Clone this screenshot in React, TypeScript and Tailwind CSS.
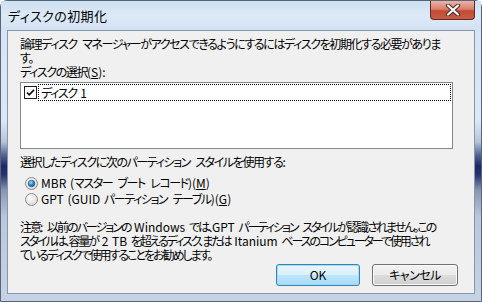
import React from "react";

const font = { fontFamily: '"Noto Sans CJK JP", "Liberation Sans", sans-serif' };

function L({ children }: { children: React.ReactNode }) {
  return <span className="inline-block leading-[14px] tracking-[0px] [word-spacing:1px]">{children}</span>;
}

function CheckBox() {
  return (
    <svg width="13" height="13" viewBox="0 0 13 13" className="shrink-0">
      <rect x="0.5" y="0.5" width="12" height="12" fill="#fff" stroke="#1e1e1e" />
      <path d="M3 6.5 L5.2 8.8 L10 3.8" fill="none" stroke="#111" strokeWidth="1.8" />
    </svg>
  );
}

function Radio({ checked }: { checked?: boolean }) {
  return (
    <svg width="13" height="13" viewBox="0 0 13 13" className="shrink-0">
      <defs>
        <radialGradient id="rbg" cx="0.4" cy="0.35" r="0.7">
          <stop offset="0" stopColor="#ffffff" />
          <stop offset="1" stopColor="#d6d6d6" />
        </radialGradient>
        <radialGradient id="rdot" cx="0.4" cy="0.35" r="0.7">
          <stop offset="0" stopColor="#a9e2ff" />
          <stop offset="0.5" stopColor="#2f8fd8" />
          <stop offset="1" stopColor="#1a4f8a" />
        </radialGradient>
      </defs>
      <circle cx="6.5" cy="6.5" r="6" fill="url(#rbg)" stroke="#8a8a8a" />
      {checked && <circle cx="6.5" cy="6.5" r="3.3" fill="url(#rdot)" stroke="#1d4f7e" strokeWidth="0.6" />}
    </svg>
  );
}

export default function App() {
  return (
    <div className="w-[482px] h-[302px] overflow-hidden bg-white">
      <div
        className="w-[482px] h-[302px] rounded-t-[7px] border border-[#566579] flex flex-col px-[6px] pb-[7px] bg-[linear-gradient(180deg,#d4e3f4_0%,#dbe8f7_40%,#b5c4d8_47%,#5a6b98_51%,#1c2763_55%,#27336e_58%,#8795b0_63%,#bac8dc_72%,#c6d3e4_100%)] text-[12px] text-black [font-feature-settings:'palt']"
        style={font}
      >
        <div className="h-[29px] flex items-start justify-between shrink-0 relative">
          <div className="absolute inset-x-[-6px] top-0 h-[29px] bg-[linear-gradient(180deg,#cfe0f3_0%,#dce9f7_50%,#d3e2f3_100%)]" />
          <div className="relative pt-[7px] pl-[1px] text-[13px] leading-[16px] text-black tracking-[0.4px]">
            ディスクの初期化
          </div>
          <div className="relative w-[45px] h-[19px] rounded-b-[4px] border border-t-0 border-[#5e2a22] bg-[linear-gradient(180deg,#eab3a6_0%,#d8806d_45%,#c44a33_55%,#c85d45_100%)] flex items-center justify-center">
            <svg width="16" height="12" viewBox="0 0 16 12">
              <path d="M3 1.5 L13 10.5 M13 1.5 L3 10.5" fill="none" stroke="#4a2a28" strokeWidth="4.2" strokeLinecap="round" />
              <path d="M3 1.5 L13 10.5 M13 1.5 L3 10.5" fill="none" stroke="#ffffff" strokeWidth="2.2" strokeLinecap="round" />
            </svg>
          </div>
        </div>
        <div className="flex-1 bg-[#f0f0f0] border border-[#8796a8] pl-[12px] pr-[10px] pt-[6px] flex flex-col leading-[14px] tracking-[-1.4px] [word-spacing:4px]">
          <div className="whitespace-nowrap">論理ディスク マネージャーがアクセスできるようにするにはディスクを初期化する必要がありま</div>
          <div>す。</div>
          <div>ディスクの選択<L>(<span className="underline">S</span>):</L></div>
          <div className="mt-[3px] w-[433px] h-[67px] bg-white border border-[#828790] pl-[3px] pt-[1px]">
            <div className="flex items-center h-[17px]">
              <CheckBox />
              <div className="ml-[1px] flex-1 h-[17px] mr-[1px] border border-dotted border-black flex items-center pl-[2px]">
                <span>ディスク<L>{"\u00a01"}</L></span>
              </div>
            </div>
          </div>
          <div className="mt-[6px] whitespace-nowrap">選択したディスクに次のパーティション スタイルを使用する<L>:</L></div>
          <div className="mt-[7px] pl-[5px] flex items-center gap-[3px] whitespace-nowrap">
            <Radio checked />
            <span><L>{"MBR\u00a0("}</L>マスター ブート レコード<L>)(<span className="underline">M</span>)</L></span>
          </div>
          <div className="mt-[2px] pl-[5px] flex items-center gap-[3px] whitespace-nowrap">
            <Radio />
            <span><L>{"GPT\u00a0(GUID\u00a0"}</L>パーティション テーブル<L>)(<span className="underline">G</span>)</L></span>
          </div>
          <div className="mt-[14px] whitespace-nowrap tracking-[-2px]">注意<L>{":\u00a0"}</L>以前のバージョンの<L>{"\u00a0Windows\u00a0"}</L>では、<L>{"GPT\u00a0"}</L>パーティション スタイルが認識されません。この</div>
          <div className="whitespace-nowrap tracking-[-2.1px]">スタイルは、容量が<L>{"\u00a02\u00a0TB\u00a0"}</L>を超えるディスク、または<L>{"\u00a0Itanium\u00a0"}</L>ベースのコンピューターで使用され</div>
          <div className="whitespace-nowrap tracking-[-2px]">ているディスクで使用することをお勧めします。</div>
          <div className="flex justify-end gap-[12px] pr-[6px] mt-[2px] tracking-normal [word-spacing:0px]">
            <div className="w-[84px] h-[22px] rounded-[3px] border border-[#3c7fb1] shadow-[inset_0_0_0_1px_#9be0fa] bg-[linear-gradient(180deg,#eaf6fd_0%,#d9f0fc_50%,#bee6fd_50%,#a7d9f5_100%)] flex items-center justify-center">
              OK
            </div>
            <div className="w-[86px] h-[22px] rounded-[3px] border border-[#707070] shadow-[inset_0_0_0_1px_#fcfcfc] bg-[linear-gradient(180deg,#f2f2f2_0%,#ebebeb_50%,#dddddd_50%,#cfcfcf_100%)] flex items-center justify-center tracking-[-0.5px]">
              キャンセル
            </div>
          </div>
        </div>
      </div>
    </div>
  );
}
